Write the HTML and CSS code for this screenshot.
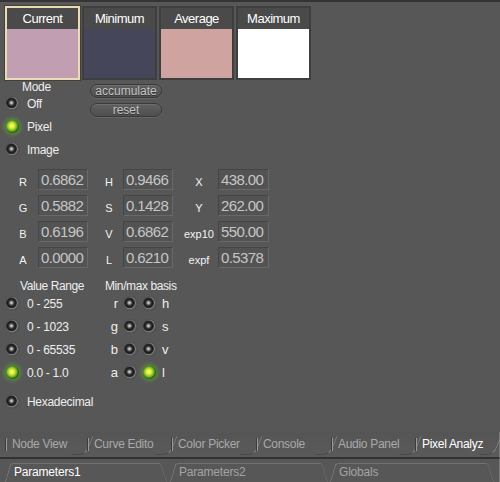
FILE: index.html
```html
<!DOCTYPE html>
<html lang="en">
<head>
    <meta charset="UTF-8">
    <title>Pixel Analyzer</title>
    <link rel="stylesheet" href="styles.css">
</head>
<body>

<div class="panel">
    <div class="main">
        <!-- Farbfelder -->
        <div class="swatches">
            <div class="swatch current">
                <div class="swatch-head">Current</div>
                <div class="swatch-color" style="background: #c19eb2;"></div>
            </div>
            <div class="swatch">
                <div class="swatch-head">Minimum</div>
                <div class="swatch-color" style="background: #45465a;"></div>
            </div>
            <div class="swatch">
                <div class="swatch-head">Average</div>
                <div class="swatch-color" style="background: #cfa39f;"></div>
            </div>
            <div class="swatch">
                <div class="swatch-head">Maximum</div>
                <div class="swatch-color" style="background: #ffffff;"></div>
            </div>
        </div>

        <!-- Modus + Knoepfe -->
        <div class="mode-row">
            <div class="mode">
                <div class="mode-label">Mode</div>
                <div class="radio-row"><span class="led"></span>Off</div>
                <div class="radio-row"><span class="led on"></span>Pixel</div>
                <div class="radio-row"><span class="led"></span>Image</div>
            </div>
            <div class="actions">
                <div class="pill">accumulate</div>
                <div class="pill">reset</div>
            </div>
        </div>

        <!-- Werte -->
        <div class="readouts">
            <div class="lbl">R</div><div class="field">0.6862</div>
            <div class="lbl mid">H</div><div class="field">0.9466</div>
            <div class="lbl right">X</div><div class="field">438.00</div>

            <div class="lbl">G</div><div class="field">0.5882</div>
            <div class="lbl mid">S</div><div class="field">0.1428</div>
            <div class="lbl right">Y</div><div class="field">262.00</div>

            <div class="lbl">B</div><div class="field">0.6196</div>
            <div class="lbl mid">V</div><div class="field">0.6862</div>
            <div class="lbl right">exp10</div><div class="field">550.00</div>

            <div class="lbl">A</div><div class="field">0.0000</div>
            <div class="lbl mid">L</div><div class="field">0.6210</div>
            <div class="lbl right">expf</div><div class="field">0.5378</div>
        </div>

        <!-- Bereich + Basis -->
        <div class="ranges">
            <div class="range-col">
                <div class="col-head">Value Range</div>
                <div class="radio-row"><span class="led"></span>0 - 255</div>
                <div class="radio-row"><span class="led"></span>0 - 1023</div>
                <div class="radio-row"><span class="led"></span>0 - 65535</div>
                <div class="radio-row"><span class="led on"></span>0.0 - 1.0</div>
            </div>
            <div class="basis-col">
                <div class="col-head">Min/max basis</div>
                <div class="basis-row"><span class="ch">r</span><span class="led"></span><span class="led"></span><span class="ch2">h</span></div>
                <div class="basis-row"><span class="ch">g</span><span class="led"></span><span class="led"></span><span class="ch2">s</span></div>
                <div class="basis-row"><span class="ch">b</span><span class="led"></span><span class="led"></span><span class="ch2">v</span></div>
                <div class="basis-row"><span class="ch">a</span><span class="led"></span><span class="led on"></span><span class="ch2">l</span></div>
            </div>
        </div>

        <div class="radio-row hex"><span class="led"></span>Hexadecimal</div>
    </div>

    <!-- Reiter unten -->
    <div class="tabs">
        <div class="tab" style="width: 82px;">Node View</div>
        <div class="tab" style="width: 84px;">Curve Edito</div>
        <div class="tab" style="width: 85px;">Color Picker</div>
        <div class="tab" style="width: 75px;">Console</div>
        <div class="tab" style="width: 84px;">Audio Panel</div>
        <div class="tab active" style="width: 80px;">Pixel Analyz</div>
    </div>
    <div class="ptabs">
        <div class="ptab active" style="width: 162px;">Parameters1</div>
        <div class="ptab" style="width: 157px;">Parameters2</div>
        <div class="ptab" style="width: 164px;">Globals</div>
    </div>
</div>

</body>
</html>
```

FILE: styles.css
```css
body {
    margin: 0;
    padding: 0;
    font-family: "Liberation Sans", Arial, sans-serif;
    background: #575757;
    color: #eeeeee;
    width: 500px;
    height: 482px;
    overflow: hidden;
}

.panel {
    display: flex;
    flex-direction: column;
    height: 482px;
    box-sizing: border-box;
    border-top: 2px solid #343434;
}

.main {
    flex: 1;
    padding-top: 4px;
}

/* Farbfelder oben */
.swatches {
    display: flex;
    gap: 2px;
    padding-left: 5px;
}

.swatch {
    width: 75px;
    height: 74px;
    box-sizing: border-box;
    border: 2px solid #3e3e3e;
    display: flex;
    flex-direction: column;
}

.swatch.current {
    border-color: #e9dbb8;
    box-shadow: 0 0 0 1px #454036;
}

.swatch-head {
    height: 21px;
    line-height: 22px;
    background: #4a4a4a;
    text-align: center;
    font-size: 13px;
    letter-spacing: -0.5px;
    color: #fff;
}

.swatch-color {
    flex: 1;
}

/* Modus */
.mode-row {
    display: flex;
}

.mode {
    width: 90px;
    box-sizing: border-box;
    padding-left: 6px;
}

.mode-label {
    margin-top: 1px;
    height: 11px;
    line-height: 12px;
    padding-left: 16px;
    font-size: 12px;
    letter-spacing: -0.3px;
}

.radio-row {
    display: flex;
    align-items: center;
    gap: 8px;
    height: 23px;
    font-size: 12px;
    letter-spacing: -0.3px;
}

.led {
    width: 13px;
    height: 13px;
    flex: none;
    border-radius: 50%;
    background: radial-gradient(circle at 42% 45%, #e0e0e0 0, #a0a0a0 1.2px, #3a3a3a 2.6px, #1a1a1a 4px, #2c2c2c 5px, #8c8c8c 5.9px, #5a5a5a 6.5px);
    box-shadow: 0 0 1px 0 #2a2a2a;
}

.led.on {
    background: radial-gradient(circle at 45% 45%, #fbff8a 0, #dcea36 2.5px, #86c022 4.5px, #3f8a1a 6px, #2e6414 6.5px);
    box-shadow: 0 0 4px 2px rgba(96, 190, 40, 0.5);
}

.actions {
    display: flex;
    flex-direction: column;
    gap: 5px;
    padding-top: 4px;
}

.pill {
    width: 72px;
    height: 14px;
    box-sizing: border-box;
    border: 1px solid #3a3a3a;
    border-radius: 7px;
    background: linear-gradient(#606060, #4f4f4f);
    box-shadow: inset 0 1px 0 #6e6e6e, 0 1px 0 #666;
    color: #c4c4c4;
    font-size: 12px;
    line-height: 12px;
    text-align: center;
    text-shadow: 0 1px 0 #333;
}

/* Zahlenfelder */
.readouts {
    display: grid;
    grid-template-columns: 30px 50px 35px 50px 45px 51px;
    grid-auto-rows: 21px;
    row-gap: 5px;
    margin-top: 8px;
    padding-left: 8px;
}

.lbl {
    align-self: end;
    padding-bottom: 1px;
    font-size: 11px;
    line-height: 13px;
    text-align: center;
    color: #f4f4f4;
}

.lbl.mid {
    padding-left: 7px;
}

.lbl.right {
    padding-left: 7px;
}

.field {
    box-sizing: border-box;
    border: 1px solid;
    border-color: #454545 #696969 #696969 #454545;
    background: #535353;
    color: #c6c6c6;
    font-size: 15px;
    letter-spacing: -0.6px;
    line-height: 19px;
    padding-left: 2px;
    overflow: hidden;
    white-space: nowrap;
}

/* Wertebereich */
.ranges {
    display: flex;
    margin-top: 12px;
    padding-left: 6px;
}

.range-col {
    width: 99px;
}

.col-head {
    height: 12px;
    line-height: 12px;
    font-size: 12px;
    letter-spacing: -0.4px;
}

.range-col .col-head {
    padding-left: 14px;
}

.basis-row {
    display: flex;
    align-items: center;
    gap: 6px;
    height: 23px;
    font-size: 13px;
}

.ch {
    width: 13px;
    text-align: right;
}

.hex {
    margin-top: 6px;
    padding-left: 6px;
}

/* Reiterleiste 1 */
.tabs {
    display: flex;
    height: 25px;
    padding-left: 6px;
    border-bottom: 2px solid #323232;
    border-right: 1px solid #7a7a7a;
    background: linear-gradient(#555 0, #5a5a5a 100%);
}

.tab {
    position: relative;
    box-sizing: border-box;
    padding-left: 6px;
    line-height: 25px;
    font-size: 12px;
    letter-spacing: -0.3px;
    color: #a9a9a9;
    white-space: nowrap;
}

.tab.active {
    color: #fff;
}

.tab::before {
    content: "";
    position: absolute;
    left: 0;
    top: 6px;
    bottom: 6px;
    width: 1px;
    background: #9a9a9a;
    box-shadow: -1px 0 0 #3c3c3c;
}

.tab::after {
    content: "";
    position: absolute;
    right: 2px;
    top: 4px;
    bottom: 2px;
    width: 14px;
    border-right: 1px solid #858585;
    border-bottom: 1px solid #484848;
    border-bottom-right-radius: 7px;
    transform: skewX(-22deg);
    transform-origin: bottom;
}

/* Reiterleiste 2 */
.ptabs {
    display: flex;
    flex: none;
    height: 23px;
    padding-left: 5px;
    gap: 3px;
    border-right: 1px solid #7a7a7a;
}

.ptab {
    position: relative;
    box-sizing: border-box;
    margin-top: 4px;
    padding-left: 9px;
    line-height: 19px;
    font-size: 12px;
    letter-spacing: -0.2px;
    color: #a4a4a4;
}

.ptab.active {
    color: #fff;
}

.ptab::before,
.ptab::after {
    content: "";
    position: absolute;
    top: 0;
    bottom: 0;
    width: 50%;
    border-top: 1px solid #727272;
    transform-origin: bottom;
}

.ptab::before {
    left: 0;
    border-left: 1px solid #7c7c7c;
    border-top-left-radius: 3px;
    transform: skewX(-16deg);
}

.ptab::after {
    right: 0;
    border-right: 1px solid #6a6a6a;
    border-top-right-radius: 3px;
    transform: skewX(16deg);
}
```
